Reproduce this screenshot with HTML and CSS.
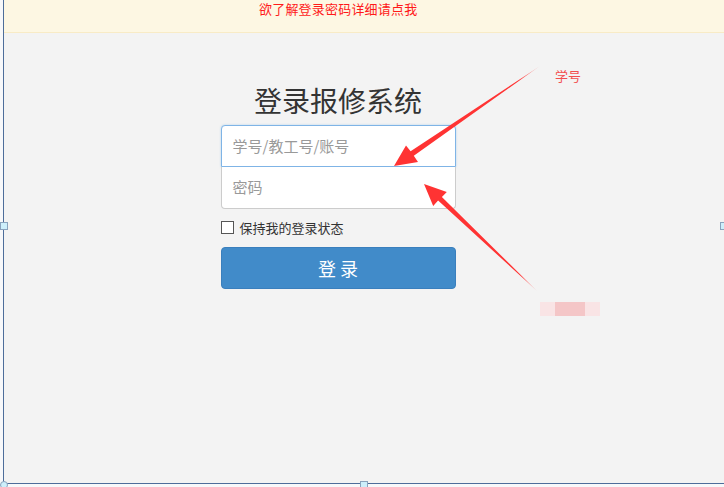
FILE: index.html
```html
<!DOCTYPE html>
<html lang="zh">
<head>
<meta charset="utf-8">
<title>登录报修系统</title>
<link rel="stylesheet" href="styles.css">
</head>
<body>
<div class="frame">
  <div class="banner"><a class="banner-link">欲了解登录密码详细请点我</a></div>
  <div class="main">
    <h1 class="title">登录报修系统</h1>
    <div class="form">
      <div class="field field-top is-focus">学号/教工号/账号</div>
      <div class="field field-bottom">密码</div>
      <label class="remember"><span class="box"></span><span>保持我的登录状态</span></label>
      <div class="btn">登 录</div>
    </div>
  </div>
</div>

<svg class="overlay" width="724" height="487" viewBox="0 0 724 487">
  <defs>
    <linearGradient id="fade1" x1="540" y1="66" x2="394" y2="166" gradientUnits="userSpaceOnUse">
      <stop offset="0" stop-color="#ff3b3b" stop-opacity="0.2"/>
      <stop offset="0.15" stop-color="#ff3333"/>
      <stop offset="1" stop-color="#ff3333"/>
    </linearGradient>
    <linearGradient id="fade2" x1="537" y1="290" x2="424" y2="184" gradientUnits="userSpaceOnUse">
      <stop offset="0" stop-color="#ff3b3b" stop-opacity="0.3"/>
      <stop offset="0.15" stop-color="#ff3333"/>
      <stop offset="1" stop-color="#ff3333"/>
    </linearGradient>
  </defs>
  <polygon fill="url(#fade1)" points="394,166 418,162 413.8,155.8 540,66 410.6,151.2 406,145.5"/>
  <polygon fill="url(#fade2)" points="424,184 446.8,192 441.9,197 537,291 438.1,200.6 433.2,206"/>
</svg>
<span class="note">学号</span>
<span class="blur"><span class="blur-core"></span></span>
<span class="handle handle-left"></span>
<span class="handle handle-right"></span>
<span class="handle handle-bottom"></span>
<span class="handle handle-corner"></span>
</body>
</html>
```

FILE: styles.css
```css
html, body {
  margin: 0;
  padding: 0;
}
body {
  width: 724px;
  height: 487px;
  overflow: hidden;
  background: #f7f8fa;
  font-family: "Noto Sans CJK SC", "Noto Sans", sans-serif;
  position: relative;
}
.frame {
  margin-left: 3px;
  height: 484px;
  border-left: 1px solid #4d6d9a;
  border-bottom: 1px solid #4d6d9a;
  background: #f3f3f3;
  box-sizing: border-box;
  display: flex;
  flex-direction: column;
}
.banner {
  height: 33px;
  background: #fdf7e3;
  border-bottom: 1px solid #f8ebc6;
  box-sizing: border-box;
  padding-left: 255px;
  padding-top: 1px;
}
.banner-link {
  display: block;
  width: 170px;
  font-size: 13px;
  line-height: 16px;
  color: #ff1a1a;
  white-space: nowrap;
  letter-spacing: 0.2px;
}
.main {
  width: 400px;
  margin-left: 134px;
  display: flex;
  flex-direction: column;
  align-items: center;
}
.title {
  margin: 46px 0 0 0;
  font-size: 28px;
  font-weight: 400;
  line-height: 42px;
  height: 46px;
  color: #333;
}
.form {
  width: 235px;
  display: flex;
  flex-direction: column;
}
.field {
  height: 42px;
  box-sizing: border-box;
  background: #fff;
  border: 1px solid #ccc;
  padding: 0 11px;
  font-size: 15px;
  line-height: 40px;
  color: #999;
}
.field-top {
  border-radius: 4px 4px 0 0;
}
.field-top.is-focus {
  border-color: #7fb4e6;
  box-shadow: 0 0 2px rgba(102, 175, 233, 0.5);
}
.field-bottom {
  border-top: none;
  border-radius: 0 0 4px 4px;
}
.remember {
  display: flex;
  align-items: center;
  gap: 6px;
  margin-top: 11px;
  height: 14px;
  font-size: 13px;
  color: #333;
}
.box {
  width: 11px;
  height: 11px;
  border: 1px solid #555;
  background: #fff;
  flex: none;
}
.btn {
  margin-top: 13px;
  height: 42px;
  box-sizing: border-box;
  border: 1px solid #3a7fbd;
  border-radius: 4px;
  background: #418bc9;
  color: #fff;
  font-size: 18px;
  line-height: 40px;
  text-align: center;
}
.overlay {
  position: absolute;
  left: 0;
  top: 0;
  pointer-events: none;
}
.note {
  position: absolute;
  left: 555px;
  top: 67px;
  font-size: 13px;
  line-height: 18px;
  color: #f24f4f;
}
.blur {
  position: absolute;
  left: 540px;
  top: 302px;
  width: 60px;
  height: 14px;
  background: #f9e4e5;
  display: flex;
  justify-content: center;
}
.blur-core {
  width: 30px;
  height: 14px;
  background: #f4c6c7;
}
.handle {
  position: absolute;
  width: 6px;
  height: 6px;
  background: #cdeffb;
  border: 1px solid #8aa3bd;
}
.handle-left {
  left: 0;
  top: 222px;
}
.handle-right {
  left: 720px;
  top: 222px;
}
.handle-bottom {
  left: 360px;
  top: 481px;
}
.handle-corner {
  left: 0;
  top: 481px;
  border-radius: 50%;
}
```
